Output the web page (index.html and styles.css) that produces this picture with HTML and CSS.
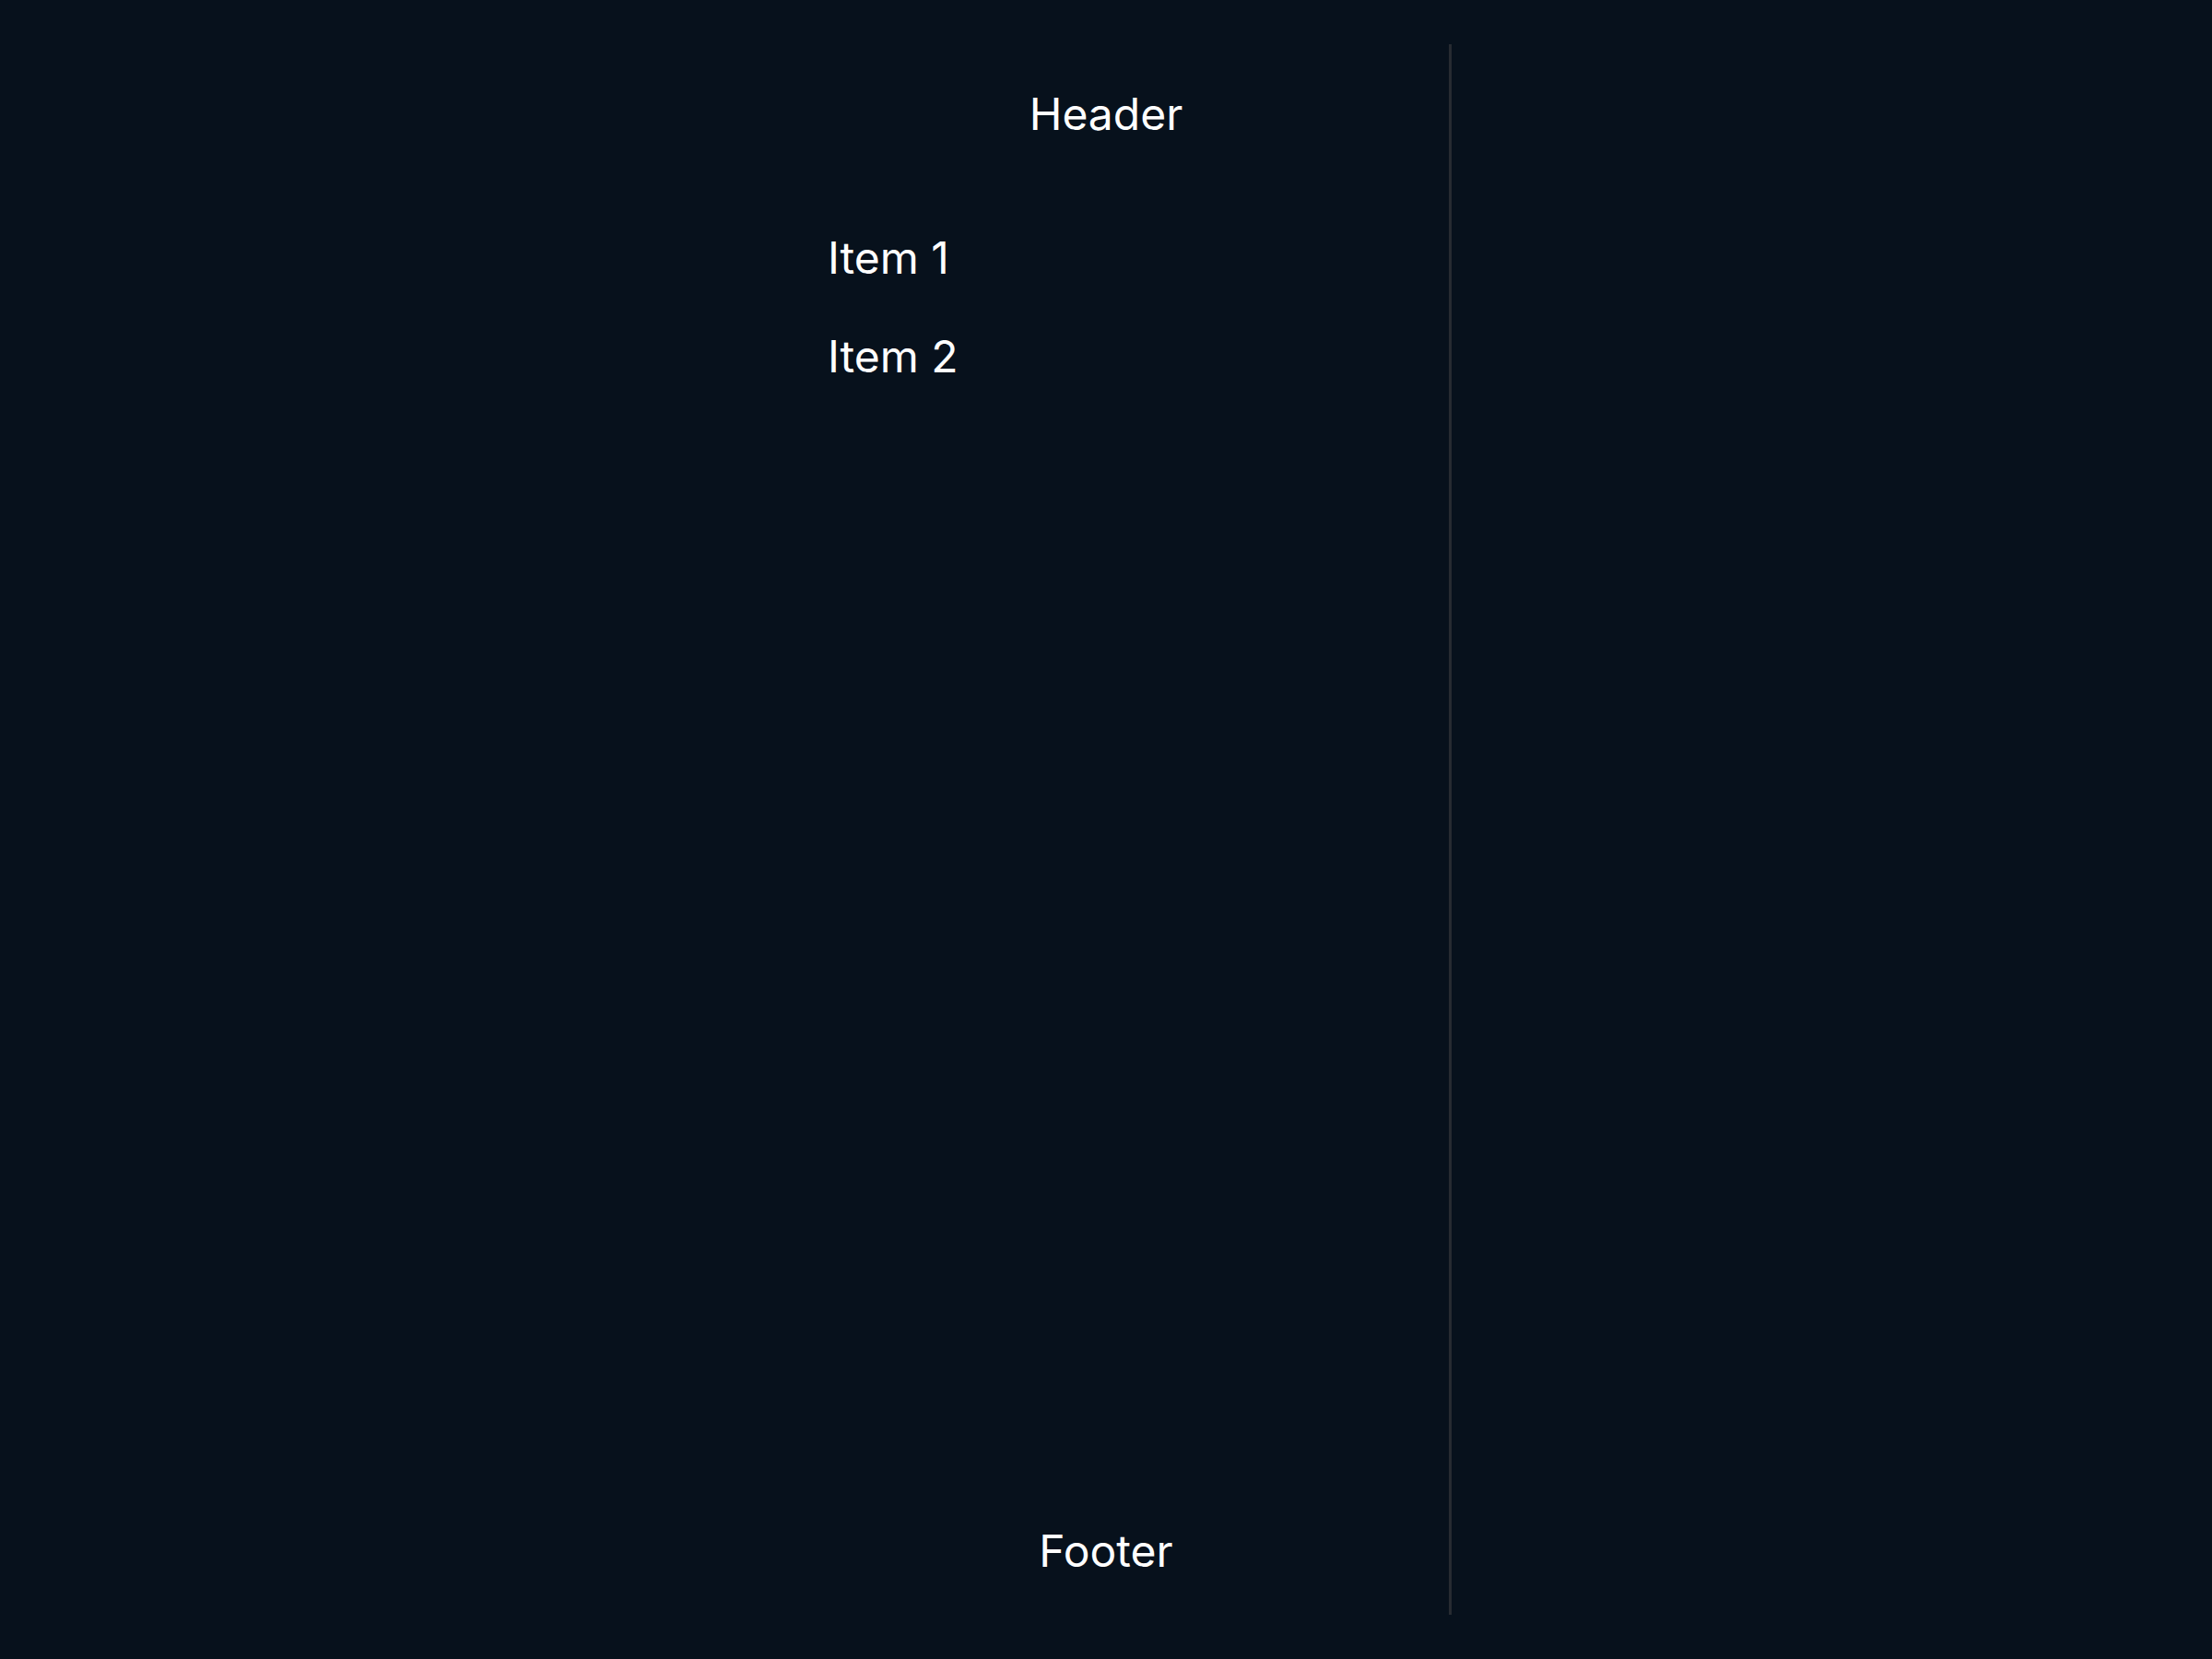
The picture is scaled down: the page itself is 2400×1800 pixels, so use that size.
FILE: index.html
```html
<!DOCTYPE html>
<html lang="en">

<head>
    <meta charset="UTF-8">
    <meta name="viewport" content="width=device-width, initial-scale=1.0">
    <title>Layout</title>
    <link rel="stylesheet" href="styles.css">
</head>

<body>
    <div class="page">
        <div class="main">
            <div class="header">Header</div>
            <ul class="list">
                <li>Item 1</li>
                <li>Item 2</li>
            </ul>
            <div class="footer">Footer</div>
        </div>
        <div class="side"></div>
    </div>
</body>

</html>
```
FILE: styles.css
```css
html,
body {
    margin: 0;
    height: 100%;
    background-color: #07111c;
}

body {
    font-family: Inter, "Noto Sans", sans-serif;
    font-size: 48px;
    line-height: 1.2;
    color: #ffffff;
}

.page {
    display: flex;
    padding: 48px 0;
    height: 1800px;
    box-sizing: border-box;
}

.main {
    width: 1575px;
    box-sizing: border-box;
    display: flex;
    flex-direction: column;
    padding: 47px 0 40px 828px;
    border-right: 3px solid #272b31;
}

.header {
    text-align: center;
}

.list {
    list-style: none;
    margin: 98px 0 0 70px;
    padding: 0;
    display: flex;
    flex-direction: column;
    gap: 50px;
}

.footer {
    margin-top: auto;
    text-align: center;
}

.side {
    flex: 1;
}
```
